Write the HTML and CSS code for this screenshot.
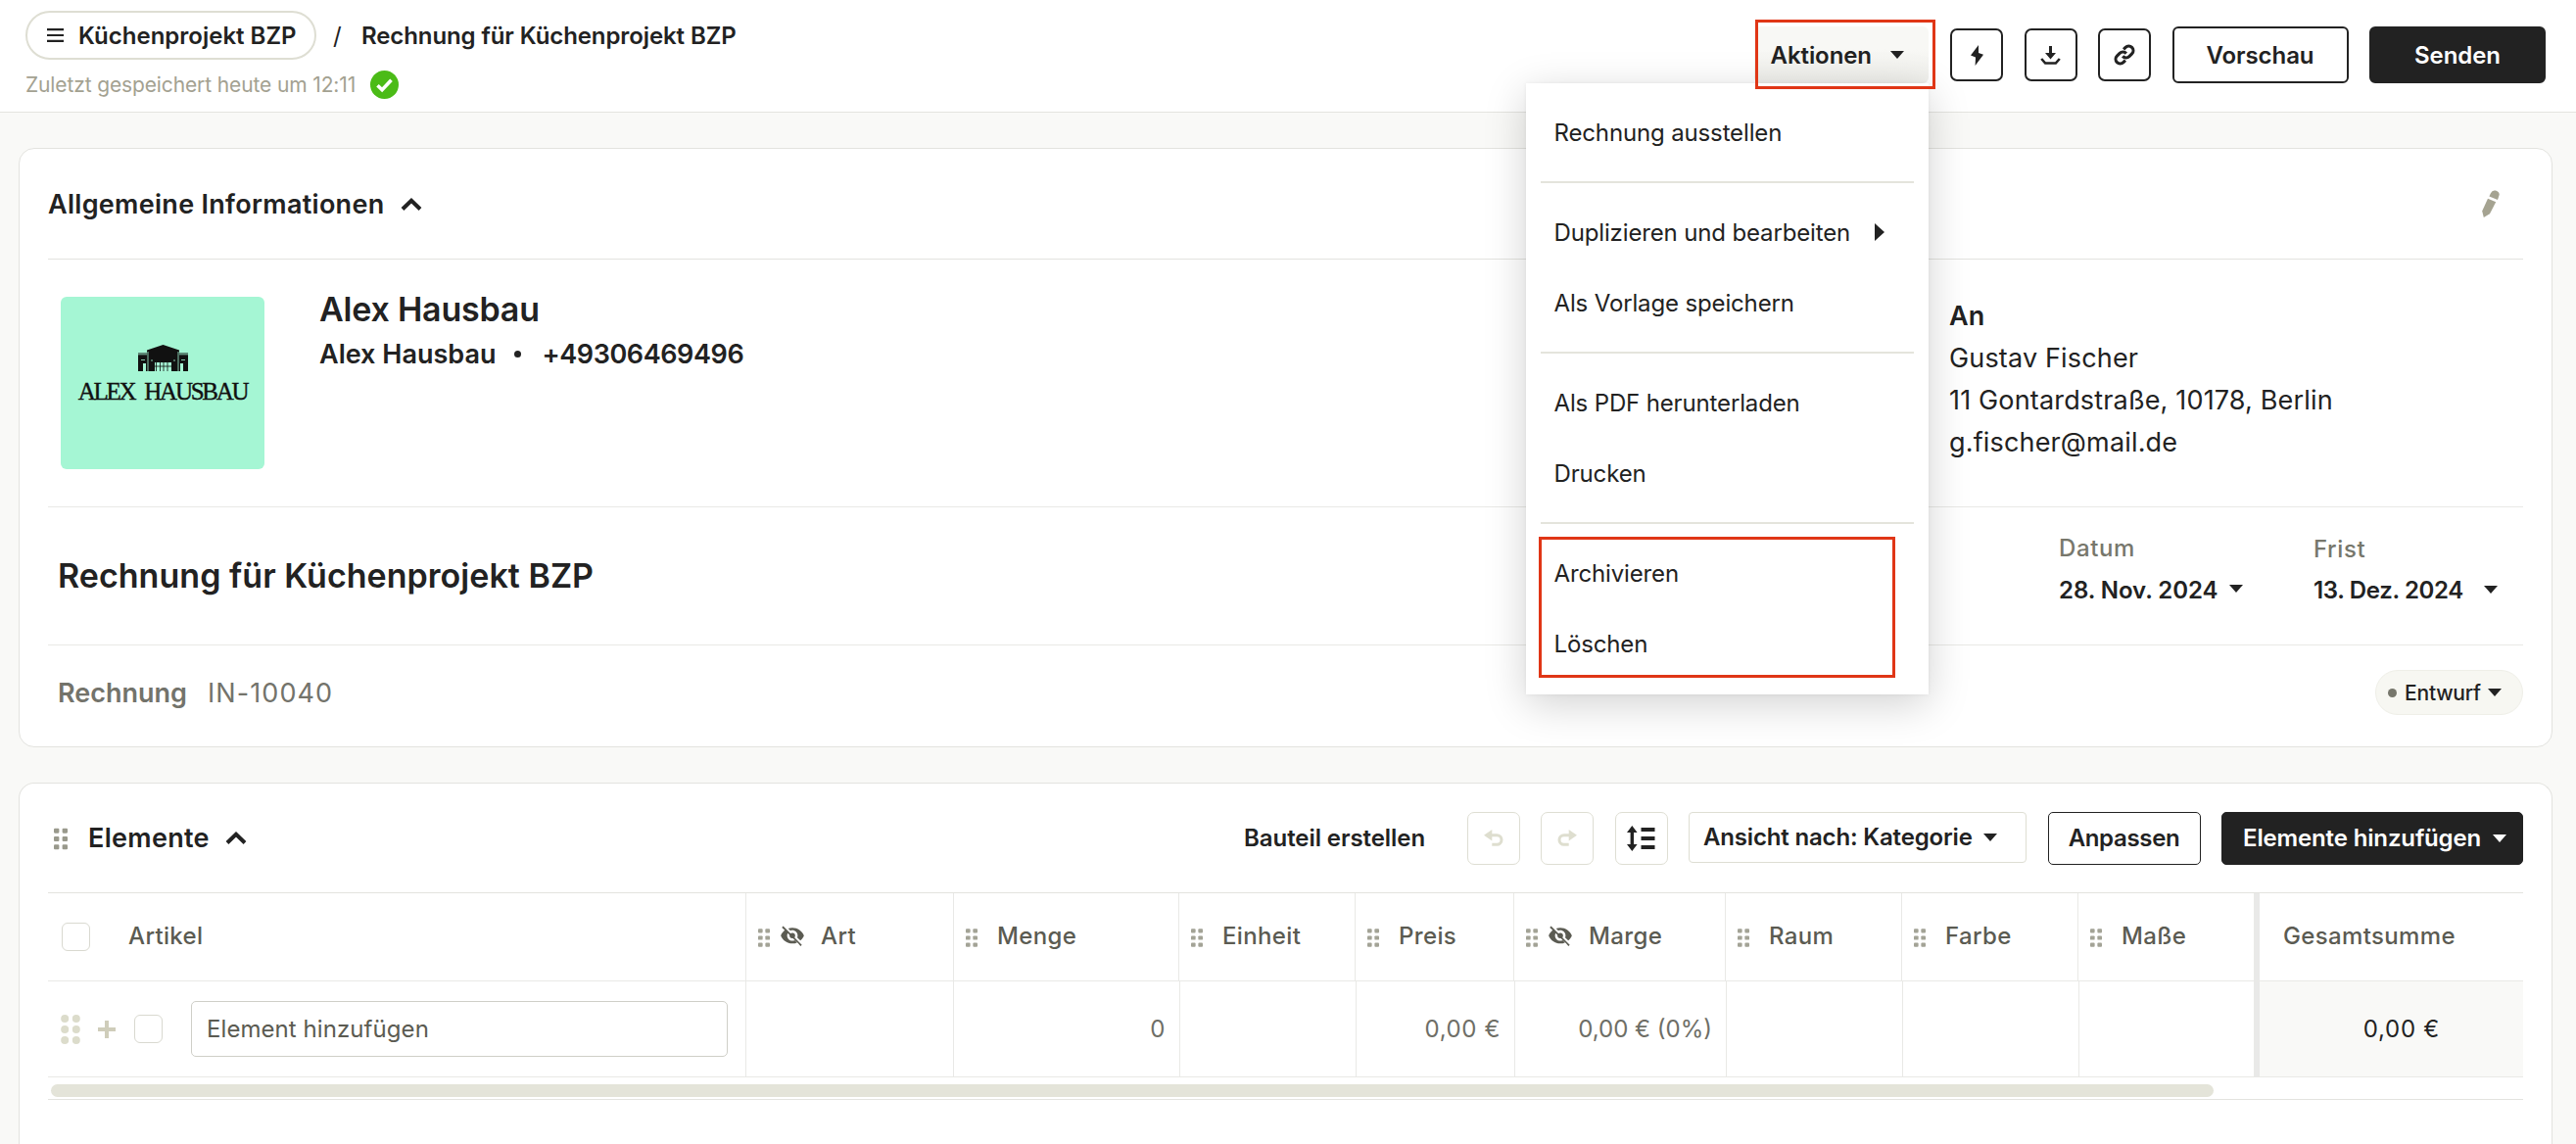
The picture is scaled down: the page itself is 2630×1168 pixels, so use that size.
FILE: index.html
```html
<!DOCTYPE html>
<html lang="de">
<head>
    <meta charset="UTF-8">
    <meta name="viewport" content="width=device-width, initial-scale=1.0">
    <title>Rechnung für Küchenprojekt BZP</title>
    <link rel="stylesheet" href="styles.css">
</head>
<body>
    <!-- Shared icons -->
    <svg class="sprite" xmlns="http://www.w3.org/2000/svg">
        <symbol id="grip" viewBox="0 0 13 20">
            <rect x="0" y="0" width="5" height="4.6" rx="1"/><rect x="8" y="0" width="5" height="4.6" rx="1"/>
            <rect x="0" y="7.7" width="5" height="4.6" rx="1"/><rect x="8" y="7.7" width="5" height="4.6" rx="1"/>
            <rect x="0" y="15.4" width="5" height="4.6" rx="1"/><rect x="8" y="15.4" width="5" height="4.6" rx="1"/>
        </symbol>
        <symbol id="caret" viewBox="0 0 14 8">
            <path d="M0 0h14L7 8z"/>
        </symbol>
        <symbol id="chevron" viewBox="0 0 22 13">
            <path d="M2 11.5l9-8.7 9 8.7" fill="none" stroke="currentColor" stroke-width="4"/>
        </symbol>
        <symbol id="eye-off" viewBox="1 2.5 22 19.5">
            <path d="M12 7c2.76 0 5 2.24 5 5 0 .65-.13 1.26-.36 1.83l2.92 2.92c1.51-1.26 2.7-2.89 3.43-4.75-1.73-4.39-6-7.5-11-7.5-1.4 0-2.74.25-3.98.7l2.16 2.16C10.74 7.13 11.35 7 12 7z"/>
            <path d="M2 4.27l2.28 2.28.46.46C3.08 8.3 1.78 10.02 1 12c1.73 4.39 6 7.5 11 7.5 1.55 0 3.03-.3 4.38-.84l-2.2-2.19C13.41 16.87 12.76 17 12 17c-2.76 0-5-2.24-5-5 0-.79.2-1.53.53-2.2L16.8 18.66l.42.42L19.73 22 21 20.73 3.27 3z"/>
            <circle cx="12" cy="12" r="2.6"/>
        </symbol>
        <symbol id="undo" viewBox="0 0 20 17">
            <path d="M0 5.7L8.3 0v11.4z"/>
            <path d="M7 5.7h6.2a4.6 4.6 0 0 1 0 9.6H8.3" fill="none" stroke="currentColor" stroke-width="3"/>
        </symbol>
    </svg>

    <header class="topbar">
        <div class="topbar-left">
            <div class="breadcrumb">
                <button class="project-pill">
                    <svg class="burger" viewBox="0 0 17 14"><path d="M0 1.2h17M0 7h17M0 12.8h17" stroke="currentColor" stroke-width="2.2"/></svg>
                    Küchenprojekt BZP
                </button>
                <span class="slash">/</span>
                <span class="current">Rechnung für Küchenprojekt BZP</span>
            </div>
            <div class="saved">
                Zuletzt gespeichert heute um 12:11
                <svg class="check" viewBox="0 0 29 29"><circle cx="14.5" cy="14.5" r="14.5" fill="#4bbb17"/><path d="M7.5 15.3l4.6 4.5 9.4-10" fill="none" stroke="#fff" stroke-width="3.6"/></svg>
            </div>
        </div>

        <div class="topbar-right">
            <div class="actions">
                <button class="actions-toggle">Aktionen <svg class="caret"><use href="#caret"/></svg></button>
                <ul class="menu">
                    <li>Rechnung ausstellen</li>
                    <li class="divider"></li>
                    <li>Duplizieren und bearbeiten <svg class="submenu-arrow" viewBox="0 0 10 18"><path d="M0 0l10 9-10 9z"/></svg></li>
                    <li>Als Vorlage speichern</li>
                    <li class="divider"></li>
                    <li>Als PDF herunterladen</li>
                    <li>Drucken</li>
                    <li class="divider"></li>
                    <li>Archivieren</li>
                    <li>Löschen</li>
                </ul>
                <div class="frame frame-toggle"></div>
                <div class="frame frame-items"></div>
            </div>
            <button class="icon-btn dark">
                <svg width="13" height="21" viewBox="0 0 13 21"><path d="M8 0L0 10.5l5 2L4.6 21 13 9.7l-5-1.8z"/></svg>
            </button>
            <button class="icon-btn dark">
                <svg width="21" height="19" viewBox="0 0 21 19"><path d="M9 0h3v7h4l-5.5 6.500L5 7h4z"/><path d="M1.2 13l4 4.500h10.600l4-4.500" fill="none" stroke="currentColor" stroke-width="2.6"/></svg>
            </button>
            <button class="icon-btn dark">
                <svg class="link-icon" viewBox="0 0 24 24"><path d="M10 13.5a5 5 0 0 0 7.300.3l3-3a5 5 0 0 0-7.100-7.100l-2.200 2.200"/><path d="M14 10.500a5 5 0 0 0-7.300-.3l-3 3a5 5 0 0 0 7.100 7.100l2.200-2.200"/></svg>
            </button>
            <button class="btn btn-lg">Vorschau</button>
            <button class="btn btn-lg btn-dark">Senden</button>
        </div>
    </header>

    <main>
        <section class="card">
            <div class="card-header">
                <h2>Allgemeine Informationen</h2>
                <svg class="chevron"><use href="#chevron"/></svg>
                <svg class="pencil" viewBox="0 0 18 28"><path d="M6 8.800l8.200 3.500-6.200 12L1.800 28 .2 21.500z"/><path d="M7.400 6.400l1.500-3.200Q10.600-.4 14 .6l2 .9q2.400 1.700 1.400 4.200L16 9.900z"/></svg>
            </div>

            <div class="company">
                <div class="logo">
                    <svg class="house" viewBox="0 0 51 27">
                        <path fill-rule="evenodd" d="M0 8.500h9V5.500L25.500 0 42 5.500v3h9V27h-5v-8h-3v8H34v-9H17v9H8v-8H5v8H0z"/>
                        <path d="M18.500 18v9M22.500 18v9M26 18v9M30 18v9M17 22h17" stroke="#111" stroke-width=".8"/>
                        <path d="M0 9.800h9M42 9.800h9M10 7v20M41 7v20M3 15.500h4M44 15.500h4M13 16h2M36 16h2" stroke="#a5f6d4" stroke-width=".8"/>
                    </svg>
                    <span class="logo-text">ALEX HAUSBAU</span>
                </div>
                <div class="company-info">
                    <div class="company-name">Alex Hausbau</div>
                    <div class="company-contact">
                        <span>Alex Hausbau</span><i class="bullet"></i><span class="phone">+49306469496</span>
                    </div>
                </div>
                <div class="recipient">
                    <strong>An</strong>
                    <div>Gustav Fischer</div>
                    <div>11 Gontardstraße, 10178, Berlin</div>
                    <div>g.fischer@mail.de</div>
                </div>
            </div>

            <div class="title-row">
                <h1>Rechnung für Küchenprojekt BZP</h1>
                <div class="date">
                    <label>Datum</label>
                    <div class="date-value">28. Nov. 2024 <svg class="caret"><use href="#caret"/></svg></div>
                </div>
                <div class="date due">
                    <label>Frist</label>
                    <div class="date-value">13. Dez. 2024 <svg class="caret"><use href="#caret"/></svg></div>
                </div>
            </div>

            <div class="number-row">
                <span class="doc-type">Rechnung</span>
                <span class="doc-number">IN-10040</span>
                <button class="status"><i class="status-dot"></i>Entwurf <svg class="caret"><use href="#caret"/></svg></button>
            </div>
        </section>

        <section class="card card-items">
            <div class="items-header">
                <svg class="grip grip-lg"><use href="#grip"/></svg>
                <h2>Elemente</h2>
                <svg class="chevron"><use href="#chevron"/></svg>
                <div class="toolbar">
                    <button class="link-btn">Bauteil erstellen</button>
                    <button class="icon-btn muted"><svg width="20" height="17"><use href="#undo"/></svg></button>
                    <button class="icon-btn muted"><svg class="flip" width="20" height="17"><use href="#undo"/></svg></button>
                    <button class="icon-btn">
                        <svg width="29" height="26" viewBox="0 0 29 26"><path d="M5.300 0l5.300 7H7v12h3.600l-5.300 7L0 19h3.600V7H0z"/><path d="M14.500 2h14v4h-14zM14.500 11h14v4h-14zM14.500 20h14v4h-14z"/></svg>
                    </button>
                    <button class="select">Ansicht nach: Kategorie <svg class="caret"><use href="#caret"/></svg></button>
                    <button class="btn btn-customize">Anpassen</button>
                    <button class="btn btn-dark btn-add">Elemente hinzufügen <svg class="caret"><use href="#caret"/></svg></button>
                </div>
            </div>

            <div class="table">
                <div class="row head">
                    <div class="cell first"><span class="checkbox"></span>Artikel</div>
                    <div class="cell"><svg class="grip"><use href="#grip"/></svg><svg class="eye"><use href="#eye-off"/></svg>Art</div>
                    <div class="cell"><svg class="grip"><use href="#grip"/></svg>Menge</div>
                    <div class="cell"><svg class="grip"><use href="#grip"/></svg>Einheit</div>
                    <div class="cell"><svg class="grip"><use href="#grip"/></svg>Preis</div>
                    <div class="cell"><svg class="grip"><use href="#grip"/></svg><svg class="eye"><use href="#eye-off"/></svg>Marge</div>
                    <div class="cell"><svg class="grip"><use href="#grip"/></svg>Raum</div>
                    <div class="cell"><svg class="grip"><use href="#grip"/></svg>Farbe</div>
                    <div class="cell last-scroll"><svg class="grip"><use href="#grip"/></svg>Maße</div>
                    <div class="cell total">Gesamtsumme</div>
                </div>
                <div class="row body">
                    <div class="cell first">
                        <svg class="drag" viewBox="0 0 20 30"><circle cx="4.2" cy="4" r="4"/><circle cx="15.8" cy="4" r="4"/><circle cx="4.2" cy="15" r="4"/><circle cx="15.8" cy="15" r="4"/><circle cx="4.2" cy="26" r="4"/><circle cx="15.8" cy="26" r="4"/></svg>
                        <svg class="plus" viewBox="0 0 18 18"><path d="M9 0v18M0 9h18" stroke="currentColor" stroke-width="4"/></svg>
                        <span class="checkbox"></span>
                        <input class="item-input" type="text" placeholder="Element hinzufügen">
                    </div>
                    <div class="cell"></div>
                    <div class="cell num">0</div>
                    <div class="cell"></div>
                    <div class="cell num">0,00 €</div>
                    <div class="cell num margin">0,00 € (0%)</div>
                    <div class="cell"></div>
                    <div class="cell"></div>
                    <div class="cell last-scroll"></div>
                    <div class="cell total">0,00 €</div>
                </div>
            </div>
            <div class="scroll-track"><div class="scroll-thumb"></div></div>
        </section>
    </main>
</body>
</html>
```
FILE: styles.css
```css
* {
    box-sizing: border-box;
}
body {
    margin: 0;
    background-color: #f9f9f7;
    color: #222;
    font-family: Inter, "Liberation Sans", sans-serif;
    font-size: 24px;
}
button {
    margin: 0;
    padding: 0;
    border: none;
    background: none;
    color: inherit;
    font: inherit;
    font-weight: 570;
    letter-spacing: -0.003em;
    cursor: pointer;
}
h1, h2 {
    margin: 0;
    font-weight: 580;
}
svg {
    display: block;
    flex: none;
    fill: currentColor;
}
.sprite {
    position: absolute;
    width: 0;
    height: 0;
}
.caret {
    width: 14px;
    height: 8px;
}

/* Top bar */
.topbar {
    display: flex;
    justify-content: space-between;
    height: 115px;
    padding: 11px 31px 0 26px;
    background-color: #fff;
    border-bottom: 1px solid #e4e4e0;
}
.breadcrumb {
    display: flex;
    align-items: center;
    height: 50px;
    font-weight: 580;
}
.project-pill {
    display: flex;
    align-items: center;
    width: 297px;
    height: 50px;
    padding-left: 20px;
    border: 2px solid #deded3;
    border-radius: 25px;
    letter-spacing: 0;
}
.burger {
    width: 17px;
    height: 14px;
    margin-right: 15px;
}
.slash {
    width: 46px;
    padding-left: 17px;
    font-weight: 400;
}
.current {
    letter-spacing: -0.004em;
}
.saved {
    display: flex;
    align-items: center;
    gap: 15px;
    height: 51px;
    color: #a3a191;
    font-size: 21px;
    letter-spacing: -0.006em;
}
.check {
    width: 29px;
    height: 29px;
}
.topbar-right {
    display: flex;
    align-items: center;
    gap: 21.5px;
    height: 58px;
    margin-top: 16px;
}
.icon-btn {
    display: flex;
    align-items: center;
    justify-content: center;
    width: 54px;
    height: 54px;
    border: 1px solid #deded3;
    border-radius: 7px;
}
.icon-btn.dark {
    border: 2px solid #222;
}
.icon-btn.muted {
    color: #dedecf;
}
.link-icon {
    width: 22px;
    height: 22px;
    fill: none;
    stroke: currentColor;
    stroke-width: 3.4;
}
.flip {
    transform: scaleX(-1);
}
.btn {
    border: 2px solid #222;
    border-radius: 6px;
}
.btn-lg {
    width: 180px;
    height: 58px;
}
.btn-dark {
    background-color: #222;
    color: #fff;
}

/* Actions dropdown */
.actions {
    position: relative;
    margin-right: 1px;
}
.actions-toggle {
    display: flex;
    align-items: center;
    gap: 19px;
    width: 178px;
    height: 58px;
    padding-left: 17px;
    border-radius: 6px;
    background: linear-gradient(#f8f8f5 40%, #eeeeea);
}
.menu {
    position: absolute;
    top: 58px;
    right: 0;
    z-index: 2;
    width: 411px;
    height: 624px;
    margin: 0;
    padding: 14px 15px;
    background-color: #fff;
    box-shadow: 0 10px 40px rgba(0, 0, 0, 0.18), 0 0 4px rgba(0, 0, 0, 0.06);
    list-style: none;
}
.menu li {
    display: flex;
    align-items: center;
    height: 72px;
    padding-left: 14px;
    letter-spacing: -0.006em;
}
.menu .divider {
    height: 2px;
    margin: 14px 0;
    background-color: #e4e4dc;
}
.submenu-arrow {
    width: 10px;
    height: 18px;
    margin-left: 25px;
}
.frame {
    position: absolute;
    z-index: 3;
    border: 3px solid #e03616;
    pointer-events: none;
}
.frame-toggle {
    top: -7px;
    left: 1px;
    width: 184px;
    height: 71px;
}
.frame-items {
    top: 521px;
    right: 34px;
    width: 364px;
    height: 144px;
}

/* Cards */
main {
    padding: 36px 24px 0 19px;
}
.card {
    padding: 0 29px;
    border: 1px solid #e3e3df;
    border-radius: 16px;
    background-color: #fff;
}
.card h2 {
    font-size: 27px;
    letter-spacing: 0.011em;
}
.card-header {
    display: flex;
    align-items: center;
    height: 113px;
    border-bottom: 1px solid #e3e3df;
}
.chevron {
    width: 22px;
    height: 13px;
    margin-left: 16px;
}
.pencil {
    width: 18px;
    height: 28px;
    margin: 0 24px 0 auto;
    color: #a5a391;
}

.company {
    display: flex;
    height: 253px;
    padding-left: 13px;
    border-bottom: 1px solid #e9e9e6;
}
.logo {
    display: flex;
    flex-direction: column;
    align-items: center;
    width: 208px;
    height: 176px;
    margin-top: 38px;
    padding-top: 49px;
    border-radius: 6px;
    background-color: #a5f6d4;
    color: #111;
}
.house {
    width: 51px;
    height: 27px;
}
.logo-text {
    margin-top: 5px;
    font-family: "Liberation Serif", serif;
    font-size: 25px;
    font-weight: 400;
    line-height: 32px;
    letter-spacing: -0.09em;
    word-spacing: 6px;
    white-space: nowrap;
    -webkit-text-stroke: 0.4px #111;
}
.company-info {
    width: 1664px;
    padding: 28px 0 0 56px;
    font-size: 27px;
    font-weight: 580;
}
.company-name {
    font-size: 34px;
    line-height: 46px;
    letter-spacing: -0.006em;
}
.company-contact {
    display: flex;
    align-items: center;
    line-height: 45px;
}
.bullet {
    width: 7px;
    height: 7px;
    margin: 0 21px 0 19px;
    border-radius: 50%;
    background-color: #222;
}
.phone {
    letter-spacing: -0.015em;
}
.recipient {
    padding: 36px 0 0 56px;
    font-size: 27px;
    line-height: 43px;
    letter-spacing: 0.006em;
}
.recipient strong {
    display: block;
    font-weight: 600;
}

.title-row {
    display: flex;
    height: 141px;
    padding-left: 10px;
    border-bottom: 1px solid #e9e9e6;
}
.title-row h1 {
    width: 2043px;
    font-size: 34px;
    line-height: 139px;
    letter-spacing: 0.001em;
}
.date {
    width: 260px;
    padding-top: 20px;
    line-height: 43px;
}
.date label {
    display: block;
    color: #77776c;
    font-weight: 500;
    letter-spacing: 0.025em;
}
.date-value {
    display: flex;
    gap: 12px;
    font-weight: 580;
    letter-spacing: -0.002em;
}
.date-value .caret {
    margin-top: 16px;
}
.due {
    width: 214px;
    padding-top: 22px;
    line-height: 42px;
}
.due .date-value {
    gap: 21px;
    letter-spacing: -0.014em;
}

.number-row {
    display: flex;
    align-items: center;
    height: 103px;
    padding: 0 0 7px 10px;
    color: #73736b;
    font-size: 27px;
}
.doc-type {
    width: 153px;
    font-weight: 580;
}
.doc-number {
    letter-spacing: 0.04em;
}
.status {
    display: flex;
    align-items: center;
    width: 151px;
    height: 46px;
    margin-left: auto;
    padding-left: 12px;
    border: 1px solid #efefe8;
    border-radius: 23px;
    background-color: #f7f7f2;
    color: #222;
    font-size: 21px;
    font-weight: 500;
    letter-spacing: -0.01em;
}
.status-dot {
    width: 9px;
    height: 9px;
    margin-right: 8px;
    border-radius: 50%;
    background-color: #77776c;
}
.status .caret {
    margin-left: 7px;
}

/* Items */
.card-items {
    height: 369px;
    margin-top: 36px;
    border-bottom: none;
    border-radius: 16px 16px 0 0;
}
.items-header {
    display: flex;
    align-items: center;
    height: 111px;
}
.grip {
    width: 12px;
    height: 19px;
    color: #a3a396;
}
.grip-lg {
    width: 14px;
    height: 23px;
    margin: 2px 21px 0 6px;
    color: #99998c;
}
.toolbar {
    display: flex;
    align-items: flex-start;
    gap: 21.5px;
    height: 54px;
    margin-left: auto;
}
.toolbar .btn {
    height: 54px;
    border-width: 1.5px;
    border-radius: 5px;
}
.link-btn {
    height: 54px;
    margin-right: 21px;
}
.select {
    display: flex;
    align-items: center;
    gap: 11px;
    width: 345px;
    height: 52px;
    padding-left: 14px;
    border: 1px solid #deded3;
    border-radius: 4px;
    letter-spacing: -0.007em;
}
.toolbar .btn-customize {
    width: 156px;
    letter-spacing: -0.014em;
}
.toolbar .btn-add {
    display: flex;
    align-items: center;
    gap: 12px;
    width: 308px;
    padding-left: 21px;
    letter-spacing: -0.006em;
}

.table {
    border-top: 1px solid #e3e3df;
}
.row {
    display: grid;
    grid-template-columns: 713px 212px 230px 180px 162px 216px 180px 180px 179px 1fr;
    border-bottom: 1px solid #e9e9e6;
}
.body {
    grid-template-columns: 713px 212px 231px 180px 162px 216px 180px 180px 178px 1fr;
    height: 98px;
    color: #6e6e66;
}
.head {
    height: 90px;
    color: #5b5b52;
    font-weight: 500;
    letter-spacing: 0.015em;
}
.cell {
    display: flex;
    align-items: center;
    border-right: 1px solid #e9e9e6;
}
.head .cell {
    padding: 0 0 2px 12px;
}
.head .cell.first {
    padding-left: 14px;
}
.cell.last-scroll {
    border-right: none;
}
.head .grip {
    margin: 4px 20px 0 0;
}
.eye {
    width: 24px;
    height: 21px;
    margin: 0 17px 0 -9px;
}
.checkbox {
    flex: none;
    width: 29px;
    height: 29px;
    border: 1px solid #d9d9d0;
    border-radius: 6px;
}
.head .checkbox {
    margin: 2px 39px 0 0;
}
.cell.total {
    border-right: none;
    border-left: 6px solid #e9e9e8;
}
.head .cell.total {
    padding-left: 24px;
}
.body .total {
    justify-content: flex-end;
    padding-right: 85px;
    background-color: #f9f9f7;
    color: #222;
    letter-spacing: 0.03em;
}
.body .first {
    padding-left: 13px;
}
.num {
    justify-content: flex-end;
    padding-right: 14px;
    letter-spacing: 0.025em;
}
.num.margin {
    letter-spacing: 0;
}
.drag {
    width: 20px;
    height: 30px;
    color: #dcdccb;
}
.plus {
    width: 18px;
    height: 18px;
    margin: 0 19px 0 18px;
    color: #cfcdba;
}
.item-input {
    width: 548px;
    height: 57px;
    margin-left: 29px;
    padding: 0 15px;
    border: 1px solid #cfcfc8;
    border-radius: 5px;
    font: inherit;
    letter-spacing: 0.003em;
}
.item-input::placeholder {
    color: #5b5b52;
    opacity: 1;
}
.scroll-track {
    padding: 7px 3px 2px;
    border-bottom: 1px solid #e3e3df;
}
.scroll-thumb {
    width: 2208px;
    height: 13px;
    border-radius: 7px;
    background-color: #e4e4d9;
}
```
